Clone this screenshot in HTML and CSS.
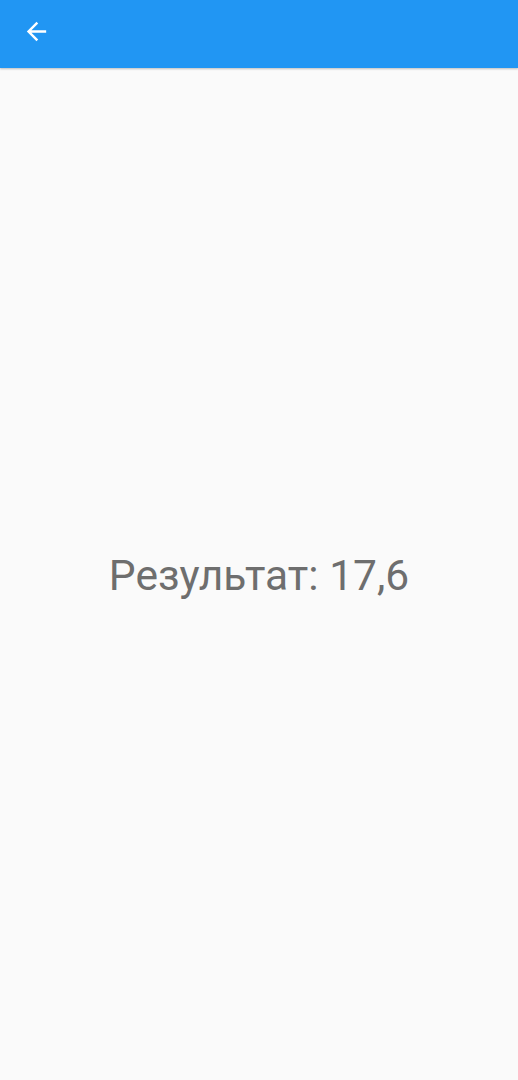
FILE: index.html
```html
<!DOCTYPE html>
<html lang="ru">
<head>
<meta charset="utf-8">
<link rel="stylesheet" href="styles.css">
</head>
<body>
<header class="appbar">
  <button class="back" aria-label="Назад">
    <svg viewBox="0 0 24 24" width="29" height="29"><path fill="#fff" d="M20 11H7.83l5.59-5.59L12 4l-8 8 8 8 1.41-1.41L7.83 13H20v-2z"/></svg>
  </button>
</header>
<main class="content">
  <p class="result">Результат: 17,6</p>
</main>
</body>
</html>
```
FILE: styles.css
```css
html, body {
  margin: 0;
  padding: 0;
  height: 100%;
}
body {
  background: #fafafa;
  font-family: Roboto, "Noto Sans", sans-serif;
  display: flex;
  flex-direction: column;
}
.appbar {
  height: 68px;
  box-sizing: border-box;
  background: #2196f3;
  display: flex;
  align-items: center;
  padding-left: 22px;
  padding-bottom: 6px;
  box-shadow: 0 1px 2px rgba(0,0,0,0.25);
  flex: none;
  position: relative;
  z-index: 1;
}
.back {
  background: none;
  border: 0;
  padding: 0;
  width: 29px;
  height: 29px;
  display: flex;
}
.content {
  flex: 1;
  display: flex;
  align-items: center;
  justify-content: center;
  padding-top: 2px;
}
.result {
  margin: 0;
  font-size: 42.5px;
  color: #6e6e6e;
  letter-spacing: 0;
}
```
